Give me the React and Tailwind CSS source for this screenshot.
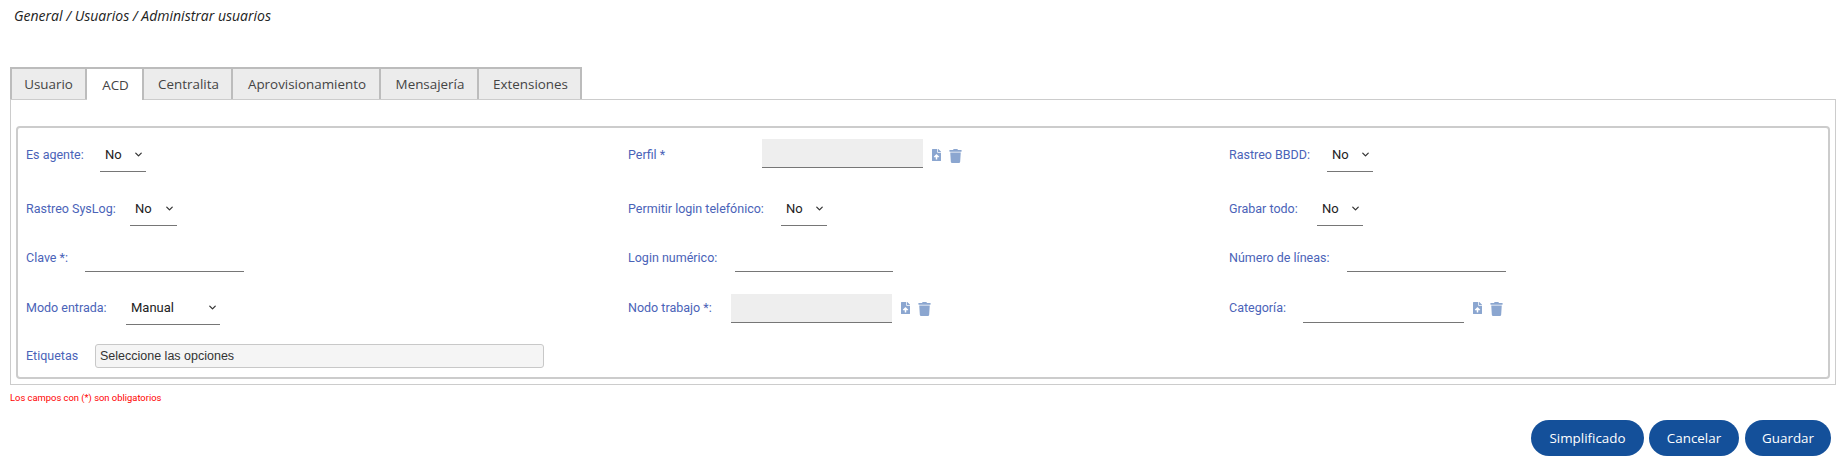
import { ChevronDown } from 'lucide-react'
import { FaFileUpload, FaTrash } from 'react-icons/fa'

const tabs = [
  { name: 'Usuario', width: 'w-[77px]' },
  { name: 'ACD', width: 'w-[57px]', active: true },
  { name: 'Centralita', width: 'w-[89px]' },
  { name: 'Aprovisionamiento', width: 'w-[148px]' },
  { name: 'Mensajería', width: 'w-[98px]' },
  { name: 'Extensiones', width: 'w-[103px]' },
]

function Label({ children, width }) {
  return <label className={`shrink-0 text-[12.5px] text-[#4a63b8] font-['Roboto',sans-serif] ${width}`}>{children}</label>
}

function SelectField({ label, labelWidth, width, options }) {
  return (
    <div className="flex items-center h-[34px]">
      <Label width={labelWidth}>{label}</Label>
      <div className={`relative h-[34px] ${width}`}>
        <select className="w-full h-full appearance-none bg-white border-b border-[#767676] pl-[5px] text-[13px] text-[#222] font-['Roboto',sans-serif] outline-none">
          {options.map((option) => <option key={option}>{option}</option>)}
        </select>
        <ChevronDown className="absolute right-[2px] top-[11px] w-[11px] h-[11px] text-[#333] pointer-events-none" strokeWidth={2.75} />
      </div>
    </div>
  )
}

function TextField({ label, labelWidth, width = 'w-[159px]' }) {
  return (
    <div className="flex items-center h-[34px]">
      <Label width={labelWidth}>{label}</Label>
      <input type="text" className={`h-[27px] bg-white border-b border-[#767676] outline-none ${width}`} />
    </div>
  )
}

function PickerField({ label, labelWidth, filled = true, up = false }) {
  return (
    <div className="flex items-center h-[34px]">
      <Label width={labelWidth}>{label}</Label>
      <input
        type="text"
        readOnly
        className={`w-[161px] h-[29px] border-b border-[#767676] outline-none ${filled ? 'bg-[#eeeeee]' : 'bg-white'} ${up ? 'mb-[3px]' : ''}`}
      />
      <FaFileUpload className="ml-[9px] w-[9px] h-[12px] text-[#8ba6d0]" />
      <FaTrash className="ml-[8px] mt-[2px] w-[13px] h-[14px] text-[#8ba6d0]" />
    </div>
  )
}

export default function App() {
  return (
    <div className="w-[1843px] h-[468px] bg-white overflow-hidden font-['Open_Sans',sans-serif]">
      <div className="pl-[14px] pt-[7px] h-[67px] text-[14px] italic text-[#222] leading-[18px]">
        General / Usuarios / Administrar usuarios
      </div>

      <div className="ml-[10px] mr-[7px]">
        <div className="flex h-[32px] relative z-10">
          {tabs.map((tab) => (
            <div
              key={tab.name}
              className={`flex items-center justify-center pt-[1px] pl-[2px] first:pl-0 text-[13.4px] text-[#444] border-t-2 border-r-2 border-[#bcbcbc] first:border-l-2 ${tab.width} ${tab.active ? 'bg-white h-[33px]' : 'bg-[#ececec] h-[32px]'}`}
            >
              {tab.name}
            </div>
          ))}
        </div>

        <div className="border border-[#cccccc] h-[286px] pl-[5px] pr-[5px] pt-[26px]">
          <div className="border-2 border-[#cccccc] rounded-[4px] h-[253px] pl-[8px] pt-[10px]">
            <div className="grid grid-cols-[602px_601px_1fr] [grid-template-rows:54px_49px_50px_53px_24px] items-start">
              <SelectField label="Es agente:" labelWidth="w-[74px]" width="w-[46px]" options={['No', 'Sí']} />
              <PickerField label="Perfil *" labelWidth="w-[134px]" up />
              <SelectField label="Rastreo BBDD:" labelWidth="w-[98px]" width="w-[46px]" options={['No', 'Sí']} />

              <SelectField label="Rastreo SysLog:" labelWidth="w-[104px]" width="w-[47px]" options={['No', 'Sí']} />
              <SelectField label="Permitir login telefónico:" labelWidth="w-[153px]" width="w-[46px]" options={['No', 'Sí']} />
              <SelectField label="Grabar todo:" labelWidth="w-[88px]" width="w-[46px]" options={['No', 'Sí']} />

              <TextField label="Clave *:" labelWidth="w-[59px]" />
              <TextField label="Login numérico:" labelWidth="w-[107px]" width="w-[158px]" />
              <TextField label="Número de líneas:" labelWidth="w-[118px]" />

              <SelectField label="Modo entrada:" labelWidth="w-[100px]" width="w-[94px]" options={['Manual', 'Automático']} />
              <PickerField label="Nodo trabajo *:" labelWidth="w-[103px]" />
              <PickerField label="Categoría:" labelWidth="w-[74px]" filled={false} />

              <div className="flex items-center h-[24px] col-span-3">
                <Label width="w-[69px]">Etiquetas</Label>
                <div className="w-[449px] h-[24px] flex items-center pl-[4px] bg-[#f5f5f5] border border-[#c8c8c8] rounded-[3px] text-[12.5px] text-[#333] font-['Liberation_Sans',sans-serif]">
                  Seleccione las opciones
                </div>
              </div>
            </div>
          </div>
        </div>

        <p className="mt-[6px] text-[9.4px] leading-[14px] text-[#ff0000] font-['Roboto',sans-serif]">Los campos con (*) son obligatorios</p>
      </div>

      <div className="flex justify-end pr-[12px] mt-[15px]">
        <button className="w-[113px] h-[36px] mr-[5px] rounded-[18px] bg-[#14509a] text-white text-[13.4px]">Simplificado</button>
        <button className="w-[90px] h-[36px] mr-[6px] rounded-[18px] bg-[#14509a] text-white text-[13.4px]">Cancelar</button>
        <button className="w-[86px] h-[36px] rounded-[18px] bg-[#14509a] text-white text-[13.4px]">Guardar</button>
      </div>
    </div>
  )
}
